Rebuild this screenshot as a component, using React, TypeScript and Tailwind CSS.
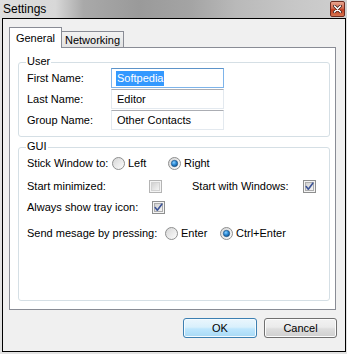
import React from 'react';

function Radio({ checked = false }: { checked?: boolean }) {
  return (
    <svg width="13" height="13" viewBox="0 0 13 13" className="flex-none">
      <defs>
        <linearGradient id="rbg" x1="0" y1="0" x2="1" y2="1">
          <stop offset="0" stopColor="#d4d4d4" />
          <stop offset="1" stopColor="#ffffff" />
        </linearGradient>
        <radialGradient id="rdot" cx="0.4" cy="0.35" r="0.7">
          <stop offset="0" stopColor="#8ad0ff" />
          <stop offset="0.5" stopColor="#2b8ad6" />
          <stop offset="1" stopColor="#0e4f8a" />
        </radialGradient>
      </defs>
      <circle cx="6.5" cy="6.5" r="6" fill="url(#rbg)" stroke="#8e8f8f" strokeWidth="1" />
      {checked && <circle cx="6.5" cy="6.5" r="3.2" fill="url(#rdot)" stroke="#1b4c7a" strokeWidth="0.6" />}
    </svg>
  );
}

function Checkbox({ checked = false, dim = false }: { checked?: boolean; dim?: boolean }) {
  return (
    <svg width="13" height="13" viewBox="0 0 13 13" className="flex-none">
      <defs>
        <linearGradient id="cbg" x1="0" y1="0" x2="1" y2="1">
          <stop offset="0" stopColor="#cfcfcf" />
          <stop offset="1" stopColor="#f7f7f7" />
        </linearGradient>
      </defs>
      <rect x="0.5" y="0.5" width="12" height="12" fill="#f4f4f4" stroke={dim ? '#b4b4b4' : '#8e8f8f'} />
      <rect x="2.5" y="2.5" width="8" height="8" fill="url(#cbg)" stroke={dim ? '#d2d2d2' : '#adadad'} />
      {checked && (
        <path d="M3.2 6.6 L5.3 9.2 L9.8 3.2" fill="none" stroke="#3d5497" strokeWidth="1.6" strokeLinecap="round" strokeLinejoin="round" />
      )}
    </svg>
  );
}

function GroupBox({ label, className, children }: { label: string; className: string; children: React.ReactNode }) {
  return (
    <div className={`relative rounded-[3px] border border-[#d5dfe5] ${className}`}>
      <span className="absolute -top-[8px] left-[7px] bg-white px-[1px] leading-[13px]">{label}</span>
      {children}
    </div>
  );
}

function Field({ label, value, focused = false }: { label: string; value: string; focused?: boolean }) {
  return (
    <div className="flex h-[20px] items-center">
      <span className="w-[84px]">{label}</span>
      <div
        className={`flex h-[20px] w-[113px] items-center border pl-[4px] ${
          focused ? 'border-[#7eb4ea] border-t-[#5c93c9]' : 'border-[#e3e9ef] border-t-[#abadb3]'
        }`}
      >
        {focused ? <span className="bg-[#3399ff] px-[1px] leading-[15px] text-white">{value}</span> : <span className="px-[1px]">{value}</span>}
      </div>
    </div>
  );
}

export default function App() {
  return (
    <div className="h-[354px] w-[347px] overflow-hidden bg-[#e2e2e2] font-['Liberation_Sans',Arial,sans-serif] text-[11px] leading-[13px] text-black">
      {/* title bar */}
      <div className="flex h-[18px] items-start justify-between bg-[linear-gradient(to_right,#dedede_0%,#d8d8d8_16%,#a9a9a9_24%,#9a9a9a_40%,#a4a4a4_55%,#b9b9b9_68%,#c7c7c7_85%,#cfcfcf_100%)]">
        <span className="pl-[3px] pt-[2px] text-[12px] leading-[14px]">Settings</span>
        <div className="mr-[2px] mt-[1px] flex h-[16px] w-[15px] items-center justify-center rounded-[2px] border border-[#6e2d22] bg-[linear-gradient(to_bottom,#e9a58f_0%,#d46a4f_45%,#c23f22_55%,#d7744f_100%)]">
          <svg width="9" height="8" viewBox="0 0 9 8">
            <path d="M1.5 1 L7.5 7 M7.5 1 L1.5 7" stroke="#3a1a14" strokeWidth="3" strokeLinecap="round" />
            <path d="M1.5 1 L7.5 7 M7.5 1 L1.5 7" stroke="#ffffff" strokeWidth="1.6" strokeLinecap="round" />
          </svg>
        </div>
      </div>

      {/* window body */}
      <div className="ml-[2px] mr-[1px] h-[334px] border border-black bg-[#f0f0f0] pl-[6px] pt-[8px]">
        <div className="flex h-[20px] items-end">
          <div className="relative z-10 -mb-px flex h-[21px] w-[53px] items-start justify-center border-l border-r border-t border-[#898c95] bg-white pt-[4px]">
            General
          </div>
          <div className="flex h-[16px] w-[62px] items-start justify-center border-r border-t border-[#898c95] bg-[linear-gradient(to_bottom,#f2f2f2,#e3e3e3)] pt-[2px]">
            Networking
          </div>
        </div>

        <div className="h-[263px] w-[327px] border border-[#898c95] bg-white pl-[8px] pt-[14px]">
          <GroupBox label="User" className="h-[75px] w-[312px] pl-[8px] pt-[5px]">
            <div className="flex flex-col gap-px">
              <Field label="First Name:" value="Softpedia" focused />
              <Field label="Last Name:" value="Editor" />
              <Field label="Group Name:" value="Other Contacts" />
            </div>
          </GroupBox>

          <GroupBox label="GUI" className="mt-[10px] h-[154px] w-[312px] pl-[8px] pt-[5px]">
            <div className="flex h-[20px] items-center">
              <span className="w-[85px]">Stick Window to:</span>
              <Radio />
              <span className="ml-[3px] w-[40px]">Left</span>
              <Radio checked />
              <span className="ml-[3px]">Right</span>
            </div>
            <div className="mt-[3px] flex h-[20px] items-center">
              <span className="w-[122px]">Start minimized:</span>
              <Checkbox dim />
              <span className="ml-[30px] w-[111px]">Start with Windows:</span>
              <Checkbox checked />
            </div>
            <div className="mt-px flex h-[20px] items-center">
              <span className="w-[125px]">Always show tray icon:</span>
              <Checkbox checked />
            </div>
            <div className="mt-[6px] flex h-[20px] items-center">
              <span className="w-[138px]">Send mesage by pressing:</span>
              <Radio />
              <span className="ml-[3px] w-[39px]">Enter</span>
              <Radio checked />
              <span className="ml-[3px]">Ctrl+Enter</span>
            </div>
          </GroupBox>
        </div>

        <div className="mt-[8px] flex justify-end gap-[7px] pr-[8px]">
          <button className="flex h-[20px] w-[74px] items-center justify-center rounded-[3px] border border-[#3c7fb1] bg-[linear-gradient(to_bottom,#eaf6fd_0%,#d9f0fc_45%,#bee6fd_55%,#a7d9f5_100%)] shadow-[inset_0_0_0_1px_#f4fbff]">
            OK
          </button>
          <button className="flex h-[20px] w-[73px] items-center justify-center rounded-[3px] border border-[#707070] bg-[linear-gradient(to_bottom,#f2f2f2_0%,#ebebeb_45%,#dddddd_55%,#cfcfcf_100%)] shadow-[inset_0_0_0_1px_#fcfcfc]">
            Cancel
          </button>
        </div>
      </div>
    </div>
  );
}
